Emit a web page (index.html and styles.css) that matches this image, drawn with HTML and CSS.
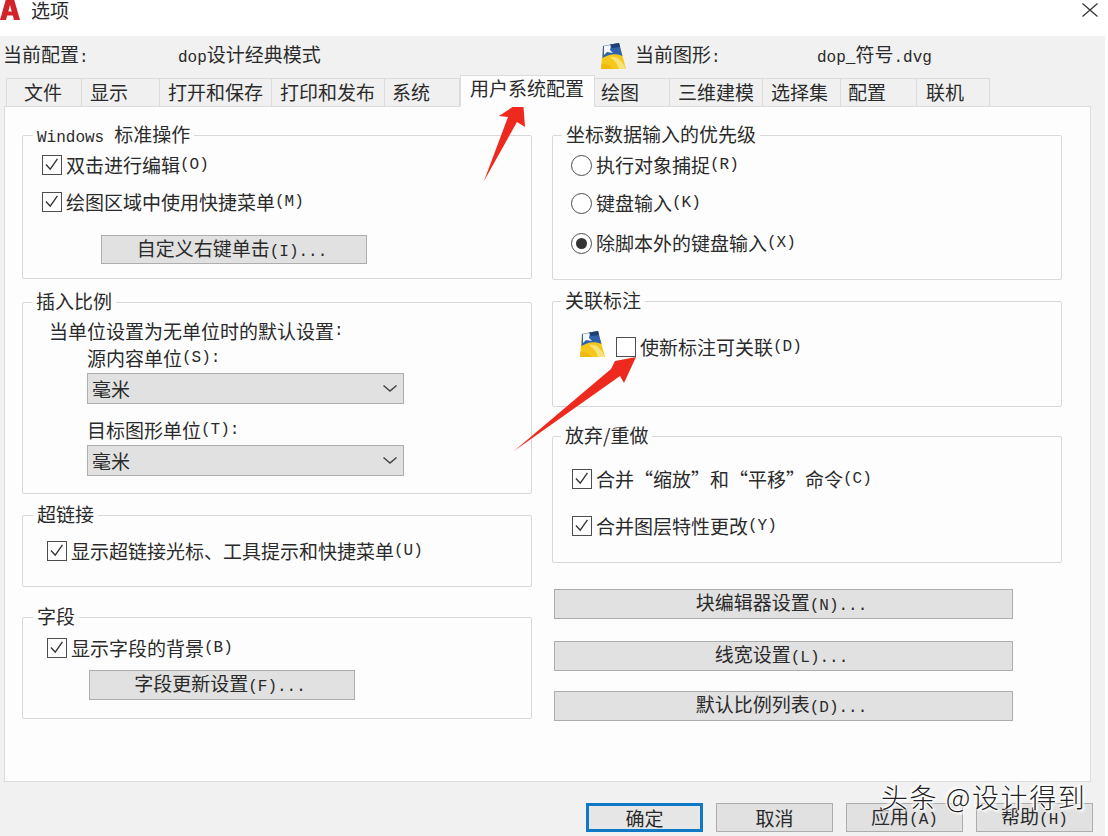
FILE: index.html
```html
<!DOCTYPE html>
<html lang="zh-CN">
<head>
<meta charset="utf-8">
<title>选项</title>
<link rel="stylesheet" href="styles.css">
</head>
<body>
<svg class="defs" width="0" height="0" aria-hidden="true">
  <symbol id="dwg" viewBox="0 0 25 26">
    <path d="M2 3 L18 0 L25 26 L0 26 Z" fill="#f4c91c"/>
    <path d="M2 3 L18 0 L21.5 13 C15 10 8 11 1.5 15 Z" fill="#2f62a8"/>
    <path d="M9 14 C15 13 20 16 24 24 L25 26 L18 26 C17 21 13 17 9 14 Z" fill="#f8e27a"/>
    <path d="M0.5 21 C5 20 9 22 12 26 L0 26 Z" fill="#efb90f"/>
    <path d="M3 3 L10 2 L9 7 L12 10 L6 9 L3 12 Z" fill="#f6f8fb"/>
    <path d="M9 1.5 L18 0 L19 4 L11 5 Z" fill="#1d3f78"/>
  </symbol>
  <symbol id="tick" viewBox="0 0 20 20">
    <path d="M3.5 10 L8.5 15.5 L17 3.5" fill="none" stroke="#333" stroke-width="1.6"/>
  </symbol>
</svg>

<div class="titlebar">
  <svg class="logo" viewBox="0 0 20 22"><path fill-rule="evenodd" d="M6 0 H14 L20 21 H14 L12.8 16.5 H7.2 L6 21 H0 Z M10 6 L8.3 12.5 H11.7 Z" fill="#d3222a"/></svg>
  <span class="title">选项</span>
  <svg class="close" viewBox="0 0 16 14"><path d="M0.5 0.5 L15.5 13.5 M15.5 0.5 L0.5 13.5" stroke="#333" stroke-width="1.2" fill="none"/></svg>
</div>

<div class="dialog">
  <div class="info">
    <span class="info-a">当前配置<span class="la">:</span></span>
    <span class="info-b"><span class="la">dop</span>设计经典模式</span>
    <svg class="dwg"><use href="#dwg"/></svg>
    <span class="info-c">当前图形<span class="la">:</span></span>
    <span class="info-d"><span class="la">dop_</span>符号<span class="la">.dvg</span></span>
  </div>

  <div class="tabs">
    <div class="tab t1">文件</div>
    <div class="tab t2">显示</div>
    <div class="tab t3">打开和保存</div>
    <div class="tab t4">打印和发布</div>
    <div class="tab t5">系统</div>
    <div class="tab active">用户系统配置</div>
    <div class="tab t7">绘图</div>
    <div class="tab t8">三维建模</div>
    <div class="tab t9">选择集</div>
    <div class="tab t10">配置</div>
    <div class="tab t11">联机</div>
  </div>

  <div class="panel">
    <div class="col">
      <fieldset class="group g-win">
        <legend>Windows<span>标准操作</span></legend>
        <div class="row"><span class="box"><svg><use href="#tick"/></svg></span>双击进行编辑<span class="la">(O)</span></div>
        <div class="row mt13"><span class="box"><svg><use href="#tick"/></svg></span>绘图区域中使用快捷菜单<span class="la">(M)</span></div>
        <button class="btn btn-right">自定义右键单击<span class="la">(I)...</span></button>
      </fieldset>

      <fieldset class="group g-ins">
        <legend>插入比例</legend>
        <div class="row">当单位设置为无单位时的默认设置<span class="la">:</span></div>
        <div class="row indent mt3">源内容单位<span class="la">(S):</span></div>
        <div class="select indent mt3">毫米<svg viewBox="0 0 14 7"><path d="M0.5 0.5 L7 6 L13.5 0.5" fill="none" stroke="#444" stroke-width="1.4"/></svg></div>
        <div class="row indent mt14">目标图形单位<span class="la">(T):</span></div>
        <div class="select indent mt3">毫米<svg viewBox="0 0 14 7"><path d="M0.5 0.5 L7 6 L13.5 0.5" fill="none" stroke="#444" stroke-width="1.4"/></svg></div>
      </fieldset>

      <fieldset class="group g-link">
        <legend>超链接</legend>
        <div class="row"><span class="box"><svg><use href="#tick"/></svg></span>显示超链接光标、工具提示和快捷菜单<span class="la">(U)</span></div>
      </fieldset>

      <fieldset class="group g-field">
        <legend>字段</legend>
        <div class="row"><span class="box"><svg><use href="#tick"/></svg></span>显示字段的背景<span class="la">(B)</span></div>
        <button class="btn btn-field">字段更新设置<span class="la">(F)...</span></button>
      </fieldset>
    </div>

    <div class="col">
      <fieldset class="group g-coord">
        <legend>坐标数据输入的优先级</legend>
        <div class="row"><span class="radio"></span>执行对象捕捉<span class="la">(R)</span></div>
        <div class="row mt14"><span class="radio"></span>键盘输入<span class="la">(K)</span></div>
        <div class="row mt16"><span class="radio on"></span>除脚本外的键盘输入<span class="la">(X)</span></div>
      </fieldset>

      <fieldset class="group g-assoc">
        <legend>关联标注</legend>
        <div class="row">
          <svg class="dwg dwg-inline"><use href="#dwg"/></svg>
          <span class="box"></span>使新标注可关联<span class="la">(D)</span>
        </div>
      </fieldset>

      <fieldset class="group g-undo">
        <legend>放弃/重做</legend>
        <div class="row"><span class="box"><svg><use href="#tick"/></svg></span>合并“缩放”和“平移”命令<span class="la">(C)</span></div>
        <div class="row mt23"><span class="box"><svg><use href="#tick"/></svg></span>合并图层特性更改<span class="la">(Y)</span></div>
      </fieldset>

      <button class="btn btn-wide mt26">块编辑器设置<span class="la">(N)...</span></button>
      <button class="btn btn-wide mt22">线宽设置<span class="la">(L)...</span></button>
      <button class="btn btn-wide mt20">默认比例列表<span class="la">(D)...</span></button>
    </div>
  </div>

  <div class="footer">
    <button class="btn act default">确定</button>
    <button class="btn act">取消</button>
    <button class="btn act">应用<span class="la">(A)</span></button>
    <button class="btn act">帮助<span class="la">(H)</span></button>
  </div>
</div>

<svg class="arrows" viewBox="0 0 1108 836" aria-hidden="true">
  <polygon points="484,181 508,117 499,116 523,100 525,127 517,122" fill="#ee2a1f"/>
  <polygon points="514,451 611,369 615,361 636,357 624,383 620,376" fill="#ee2a1f"/>
</svg>
<div class="watermark">头条 @设计得到</div>
</body>
</html>
```
FILE: styles.css
```css
* { box-sizing: border-box; }
html, body { margin: 0; padding: 0; }
body {
  width: 1108px;
  height: 836px;
  overflow: hidden;
  position: relative;
  background: #fff;
  color: #2a2a2a;
  font-family: "Noto Sans CJK SC", "Liberation Sans", sans-serif;
  font-size: 19px;
  line-height: 24px;
}
.defs { position: absolute; }
.la { font-family: "Liberation Mono", monospace; font-size: 16px; }

.titlebar { height: 36px; display: flex; align-items: flex-start; }
.logo { width: 20px; height: 22px; margin-top: -1px; flex: none; }
.title { margin-left: 11px; line-height: 20px; }
.close { width: 16px; height: 14px; margin: 3px 10px 0 auto; }

.dialog { width: 1105px; height: 800px; background: #f1f1f1; }

.info { height: 39px; display: flex; align-items: center; position: relative; padding-left: 3px; }
.info-a { width: 175px; }
.info-b { width: 423px; }
.info .dwg { width: 25px; height: 26px; flex: none; margin-right: 9px; }
.info-c { width: 182px; }

.tabs { height: 32px; display: flex; align-items: flex-end; margin: 0 0 -1px 6px; position: relative; z-index: 1; }
.tab {
  height: 29px;
  padding: 1px 0 0 8px;
  background: #f0f0f0;
  border: 1px solid #dcdcdc;
  border-width: 1px 1px 1px 0;
  white-space: nowrap;
}
.t1 { width: 76px; padding-left: 17px; border-left-width: 1px; }
.t2 { width: 78px; padding-left: 8px; }
.t3 { width: 112px; }
.t4 { width: 113px; padding-left: 8px; }
.t5 { width: 75px; padding-left: 7px; }
.active { width: 135px; height: 32px; padding: 0 0 0 9px; background: #fdfdfd; border-bottom-color: #fdfdfd; border-left-width: 1px; }
.t7 { width: 75px; padding-left: 6px; }
.t8 { width: 93px; padding-left: 8px; }
.t9 { width: 78px; }
.t10 { width: 76px; padding-left: 7px; }
.t11 { width: 73px; padding-left: 9px; }

.panel {
  width: 1087px;
  height: 676px;
  margin-left: 4px;
  padding: 15px 0 0 17px;
  background: #fdfdfd;
  border: 1px solid #dcdcdc;
  display: grid;
  grid-template-columns: 510px 510px;
  column-gap: 20px;
  align-content: start;
}
.col { display: flex; flex-direction: column; align-items: flex-start; }

.group {
  width: 510px;
  margin: 0;
  min-width: 0;
  border: 1px solid #d8d8d8;
  border-radius: 2px;
  padding: 0 0 0 19px;
}
.group legend { height: 26px; margin-left: -9px; padding: 0 4px; line-height: 23px; font-size: 19px; white-space: nowrap; }
.g-win legend { font-family: "Liberation Mono", monospace; font-size: 16px; }
.g-win legend span { font-family: "Noto Sans CJK SC", sans-serif; font-size: 19px; margin-left: 10px; }

.g-win { height: 157px; padding-top: 5px; }
.g-ins { height: 205px; margin-top: 10px; padding: 4px 0 0 26px; }
.g-ins legend { margin-left: -17px; }
.g-link { height: 85px; margin-top: 8px; padding: 11px 0 0 24px; }
.g-link legend, .g-field legend { margin-left: -14px; }
.g-field { height: 115px; margin-top: 17px; padding: 6px 0 0 24px; }
.g-coord { height: 158px; padding: 5px 0 0 18px; }
.g-coord legend { margin-left: -9px; }
.g-assoc { height: 119px; margin-top: 8px; padding: 21px 0 0 27px; }
.g-assoc legend { margin-left: -19px; }
.g-undo { height: 140px; margin-top: 16px; padding: 18px 0 0 19px; }
.g-undo legend { margin-left: -11px; }

.row { height: 24px; display: flex; align-items: center; white-space: nowrap; margin-left: 0; }
.indent { margin-left: 38px; }
.mt3 { margin-top: 3px; }
.mt13 { margin-top: 13px; }
.mt14 { margin-top: 14px; }
.mt16 { margin-top: 16px; }
.mt20 { margin-top: 20px; }
.mt22 { margin-top: 22px; }
.mt23 { margin-top: 23px; }
.mt26 { margin-top: 26px; }

.box {
  width: 20px;
  height: 20px;
  flex: none;
  margin-right: 4px;
  border: 1.5px solid #4d4d4d;
  background: #fff;
}
.box svg { display: block; width: 17px; height: 17px; }
.radio {
  width: 21px;
  height: 21px;
  flex: none;
  margin-right: 4px;
  border: 1.5px solid #4d4d4d;
  border-radius: 50%;
  background: #fff;
  display: flex;
  align-items: center;
  justify-content: center;
}
.radio.on::after { content: ""; width: 11px; height: 11px; border-radius: 50%; background: #333; }

.dwg-inline { width: 25px; height: 26px; flex: none; margin: 0 11px 6px 0; }

.select {
  width: 317px;
  height: 31px;
  padding-left: 4px;
  background: #e1e1e1;
  border: 1px solid #adadad;
  display: flex;
  align-items: center;
  justify-content: space-between;
}
.select svg { width: 14px; height: 7px; margin-right: 6px; }

.btn {
  display: block;
  font: inherit;
  color: inherit;
  padding: 0 4px 0 0;
  background: #e1e1e1;
  border: 1px solid #adadad;
  border-radius: 0;
  text-align: center;
}
.btn-right { width: 266px; height: 29px; margin: 21px 0 0 59px; }
.btn-field { width: 266px; height: 30px; margin: 10px 0 0 42px; }
.btn-wide { width: 459px; height: 30px; margin-left: 2px; }

.footer { display: flex; gap: 13px; margin: 21px 0 0 586px; }
.act { width: 117px; height: 29px; padding: 0; }
.default { border: 3px solid #0f79c6; background: #e6e6e6; }

.arrows { position: absolute; left: 0; top: 0; width: 1108px; height: 836px; pointer-events: none; }
.watermark {
  position: absolute;
  left: 881px;
  top: 779px;
  font-size: 27px;
  line-height: 36px;
  letter-spacing: 1.6px;
  font-weight: 300;
  white-space: nowrap;
  color: #222;
  text-shadow: 1px 0 1px #fff, -1px 0 1px #fff, 0 1px 1px #fff, 0 -1px 1px #fff, 2px 2px 2px #fff, -2px -2px 2px #fff;
}
```
